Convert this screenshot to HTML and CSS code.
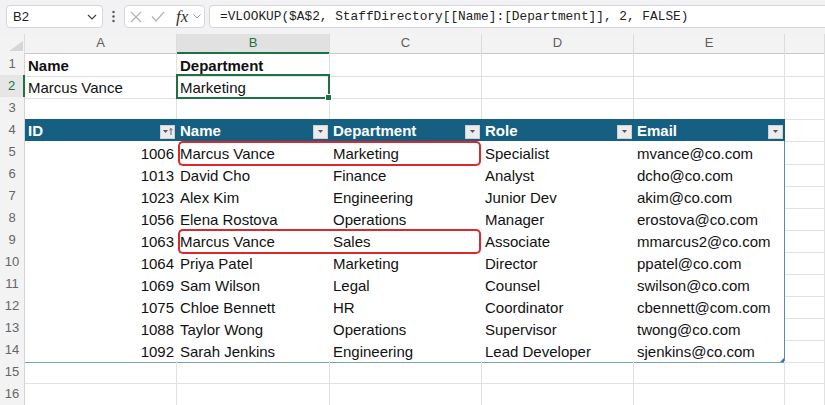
FILE: index.html
```html
<!DOCTYPE html>
<html lang="en">
<head>
    <meta charset="UTF-8">
    <meta name="viewport" content="width=device-width, initial-scale=1.0">
    <title>Staff Directory</title>
    <link rel="stylesheet" href="styles.css">
</head>
<body>
    <div class="formula-bar">
        <div class="name-box">
            <span>B2</span>
            <svg width="10" height="6" viewBox="0 0 10 6"><path d="M1 1l4 4 4-4" fill="none" stroke="#444" stroke-width="1.2"/></svg>
        </div>
        <div class="grip">
            <svg width="3" height="13" viewBox="0 0 3 13"><circle cx="1.5" cy="2" r="1.2" fill="#555"/><circle cx="1.5" cy="6.5" r="1.2" fill="#555"/><circle cx="1.5" cy="11" r="1.2" fill="#555"/></svg>
        </div>
        <div class="fx-box">
            <svg class="ico-x" width="12" height="12" viewBox="0 0 12 12"><path d="M1 1l10 10M11 1L1 11" fill="none" stroke="#b3b3b3" stroke-width="1.2"/></svg>
            <svg class="ico-ok" width="14" height="11" viewBox="0 0 14 11"><path d="M1 5.5l4 4.5L13 1" fill="none" stroke="#b3b3b3" stroke-width="1.2"/></svg>
            <span class="fx">fx</span>
            <svg class="ico-more" width="8" height="5" viewBox="0 0 8 5"><path d="M0.5 0.5l3.5 3.5 3.5-3.5" fill="none" stroke="#999" stroke-width="1"/></svg>
        </div>
        <div class="formula-input">=VLOOKUP($A$2, StaffDirectory[[Name]:[Department]], 2, FALSE)</div>
    </div>

    <div class="sheet">
        <div class="row col-heads">
            <div class="corner"><svg width="14" height="10" viewBox="0 0 14 10"><path d="M14 0V10H0z" fill="#d6d6d6"/></svg></div>
            <div class="ch">A</div><div class="ch active">B</div><div class="ch">C</div><div class="ch">D</div><div class="ch">E</div><div class="ch"></div>
        </div>

        <div class="row">
            <div class="rh">1</div>
            <div class="c bold">Name</div><div class="c bold">Department</div><div class="c"></div><div class="c"></div><div class="c"></div><div class="c"></div>
        </div>
        <div class="row">
            <div class="rh active">2</div>
            <div class="c">Marcus Vance</div><div class="c sel">Marketing</div><div class="c"></div><div class="c"></div><div class="c"></div><div class="c"></div>
        </div>
        <div class="row">
            <div class="rh">3</div>
            <div class="c"></div><div class="c"></div><div class="c"></div><div class="c"></div><div class="c"></div><div class="c"></div>
        </div>

        <!-- StaffDirectory table -->
        <div class="row">
            <div class="rh">4</div>
            <div class="c th">ID<span class="dd"><svg width="13" height="11" viewBox="0 0 13 11"><path d="M2 4h5L4.5 7z" fill="#555"/><path d="M10 9V2.5M8.3 4.2L10 2.5l1.7 1.7" fill="none" stroke="#555" stroke-width="0.9"/></svg></span></div>
            <div class="c th">Name<span class="dd"><svg width="13" height="11" viewBox="0 0 13 11"><path d="M4 4h5L6.5 7z" fill="#555"/></svg></span></div>
            <div class="c th">Department<span class="dd"><svg width="13" height="11" viewBox="0 0 13 11"><path d="M4 4h5L6.5 7z" fill="#555"/></svg></span></div>
            <div class="c th">Role<span class="dd"><svg width="13" height="11" viewBox="0 0 13 11"><path d="M4 4h5L6.5 7z" fill="#555"/></svg></span></div>
            <div class="c th last">Email<span class="dd"><svg width="13" height="11" viewBox="0 0 13 11"><path d="M4 4h5L6.5 7z" fill="#555"/></svg></span></div>
            <div class="c"></div>
        </div>
        <div class="row">
            <div class="rh">5</div>
            <div class="c t num">1006</div><div class="c t hl-l">Marcus Vance</div><div class="c t hl-r">Marketing</div><div class="c t">Specialist</div><div class="c t last">mvance@co.com</div><div class="c"></div>
        </div>
        <div class="row">
            <div class="rh">6</div>
            <div class="c t num">1013</div><div class="c t">David Cho</div><div class="c t">Finance</div><div class="c t">Analyst</div><div class="c t last">dcho@co.com</div><div class="c"></div>
        </div>
        <div class="row">
            <div class="rh">7</div>
            <div class="c t num">1023</div><div class="c t">Alex Kim</div><div class="c t">Engineering</div><div class="c t">Junior Dev</div><div class="c t last">akim@co.com</div><div class="c"></div>
        </div>
        <div class="row">
            <div class="rh">8</div>
            <div class="c t num">1056</div><div class="c t">Elena Rostova</div><div class="c t">Operations</div><div class="c t">Manager</div><div class="c t last">erostova@co.com</div><div class="c"></div>
        </div>
        <div class="row">
            <div class="rh">9</div>
            <div class="c t num">1063</div><div class="c t hl-l">Marcus Vance</div><div class="c t hl-r">Sales</div><div class="c t">Associate</div><div class="c t last">mmarcus2@co.com</div><div class="c"></div>
        </div>
        <div class="row">
            <div class="rh">10</div>
            <div class="c t num">1064</div><div class="c t">Priya Patel</div><div class="c t">Marketing</div><div class="c t">Director</div><div class="c t last">ppatel@co.com</div><div class="c"></div>
        </div>
        <div class="row">
            <div class="rh">11</div>
            <div class="c t num">1069</div><div class="c t">Sam Wilson</div><div class="c t">Legal</div><div class="c t">Counsel</div><div class="c t last">swilson@co.com</div><div class="c"></div>
        </div>
        <div class="row">
            <div class="rh">12</div>
            <div class="c t num">1075</div><div class="c t">Chloe Bennett</div><div class="c t">HR</div><div class="c t">Coordinator</div><div class="c t last">cbennett@com.com</div><div class="c"></div>
        </div>
        <div class="row">
            <div class="rh">13</div>
            <div class="c t num">1088</div><div class="c t">Taylor Wong</div><div class="c t">Operations</div><div class="c t">Supervisor</div><div class="c t last">twong@co.com</div><div class="c"></div>
        </div>
        <div class="row">
            <div class="rh">14</div>
            <div class="c t num">1092</div><div class="c t">Sarah Jenkins</div><div class="c t">Engineering</div><div class="c t">Lead Developer</div><div class="c t last corner-grip">sjenkins@co.com</div><div class="c"></div>
        </div>

        <div class="row">
            <div class="rh">15</div>
            <div class="c"></div><div class="c"></div><div class="c"></div><div class="c"></div><div class="c"></div><div class="c"></div>
        </div>
        <div class="row">
            <div class="rh">16</div>
            <div class="c"></div><div class="c"></div><div class="c"></div><div class="c"></div><div class="c"></div><div class="c"></div>
        </div>
    </div>
</body>
</html>
```

FILE: styles.css
```css
body {
    margin: 0;
    font-family: "Liberation Sans", Arial, sans-serif;
    background: #fff;
    color: #111;
    overflow: hidden;
}

/* formula bar */
.formula-bar {
    display: flex;
    align-items: center;
    height: 34px;
    padding: 0 0 1px 6px;
    box-sizing: border-box;
    background: #f2f2f4;
    overflow: hidden;
}
.name-box {
    width: 97px;
    height: 23px;
    box-sizing: border-box;
    display: flex;
    align-items: center;
    justify-content: space-between;
    padding: 0 5px 0 6px;
    background: #fff;
    border: 1px solid #d6d6d8;
    border-radius: 4px;
    font-size: 13px;
    color: #222;
}
.grip {
    width: 21px;
    display: flex;
    justify-content: center;
}
.fx-box {
    width: 81px;
    height: 23px;
    box-sizing: border-box;
    display: flex;
    align-items: center;
    padding-left: 5px;
    background: #fff;
    border: 1px solid #d6d6d8;
    border-radius: 4px;
}
.ico-ok {
    margin-left: 9px;
}
.fx {
    margin-left: 11px;
    font-family: "Liberation Serif", "Times New Roman", serif;
    font-style: italic;
    font-size: 17px;
    color: #333;
    line-height: 20px;
}
.ico-more {
    margin-left: 5px;
}
.formula-input {
    flex: 1;
    height: 23px;
    box-sizing: border-box;
    margin-left: 4px;
    margin-right: -12px;
    padding-left: 10px;
    background: #fff;
    border: 1px solid #d6d6d8;
    border-radius: 4px;
    font-family: "Liberation Mono", "Courier New", monospace;
    font-size: 12.8px;
    line-height: 21px;
    color: #222;
    white-space: nowrap;
}

/* grid */
.row {
    display: grid;
    grid-template-columns: 25px 152px 153px 152px 152px 151px 1fr;
    height: 22px;
}
.col-heads {
    height: 19px;
}
.corner,
.ch {
    box-sizing: border-box;
    background: #f3f3f3;
    border-bottom: 1px solid #c8c8c8;
}
.corner {
    display: flex;
    align-items: flex-end;
    justify-content: flex-end;
    padding: 0 1px 2px 0;
    border-right: 1px solid #dcdcdc;
}
.ch {
    border-right: 1px solid #dcdcdc;
    text-align: center;
    font-size: 13px;
    line-height: 18px;
    color: #5e5e5e;
}
.ch.active {
    background: #e1e1e1;
    color: #1e7145;
    border-bottom: 2px solid #1e7145;
}
.rh {
    box-sizing: border-box;
    background: #f3f3f3;
    border-right: 1px solid #d4d4d4;
    border-bottom: 1px solid #e3e3e3;
    text-align: center;
    font-size: 13px;
    line-height: 22px;
    color: #666;
}
.rh.active {
    background: #e6e6e6;
    color: #1e7145;
    border-right: 2px solid #1e7145;
}

.c {
    position: relative;
    box-sizing: border-box;
    padding: 2px 3px 0;
    border-right: 1px solid #e1e1e1;
    border-bottom: 1px solid #e1e1e1;
    font-size: 15px;
    line-height: 21px;
    white-space: nowrap;
}
.bold {
    font-weight: bold;
}
.num {
    text-align: right;
    padding-right: 2px;
}

/* selected cell */
.sel::after {
    content: '';
    position: absolute;
    left: -1px;
    top: -1px;
    right: -1px;
    bottom: -1px;
    border: 2px solid #1e7145;
    z-index: 2;
}
.sel::before {
    content: '';
    position: absolute;
    right: -3px;
    bottom: -3px;
    width: 5px;
    height: 5px;
    background: #1e7145;
    border: 1px solid #fff;
    z-index: 3;
}

/* table */
.t {
    background: #fff;
    border-right-color: #fff;
    border-bottom-color: #7da3ba;
}
.th {
    display: flex;
    align-items: center;
    justify-content: space-between;
    padding: 1px 1px 0 3px;
    background: #156082;
    border-right-color: #156082;
    border-bottom-color: #156082;
    color: #fff;
    font-weight: bold;
}
.t.last {
    border-right-color: #5c8ba6;
}
.th.last {
    border-right-color: #156082;
}
.dd {
    display: flex;
    align-items: center;
    justify-content: center;
    width: 15px;
    height: 14px;
    box-sizing: border-box;
    margin-top: 2px;
    background: #ececec;
    border: 1px solid #d0d0d0;
}
.corner-grip::after {
    content: '';
    position: absolute;
    right: 0;
    bottom: 0;
    border-left: 4px solid transparent;
    border-bottom: 4px solid #3a6fb0;
}

/* highlighted duplicates */
.hl-l::after,
.hl-r::after {
    content: '';
    position: absolute;
    top: 0;
    bottom: -2px;
    border: 2px solid #d9282e;
    z-index: 2;
}
.hl-l::after {
    left: 1px;
    right: -1px;
    border-right: none;
    border-radius: 5px 0 0 5px;
}
.hl-r::after {
    left: 0;
    right: 0;
    border-left: none;
    border-radius: 0 5px 5px 0;
}
```
